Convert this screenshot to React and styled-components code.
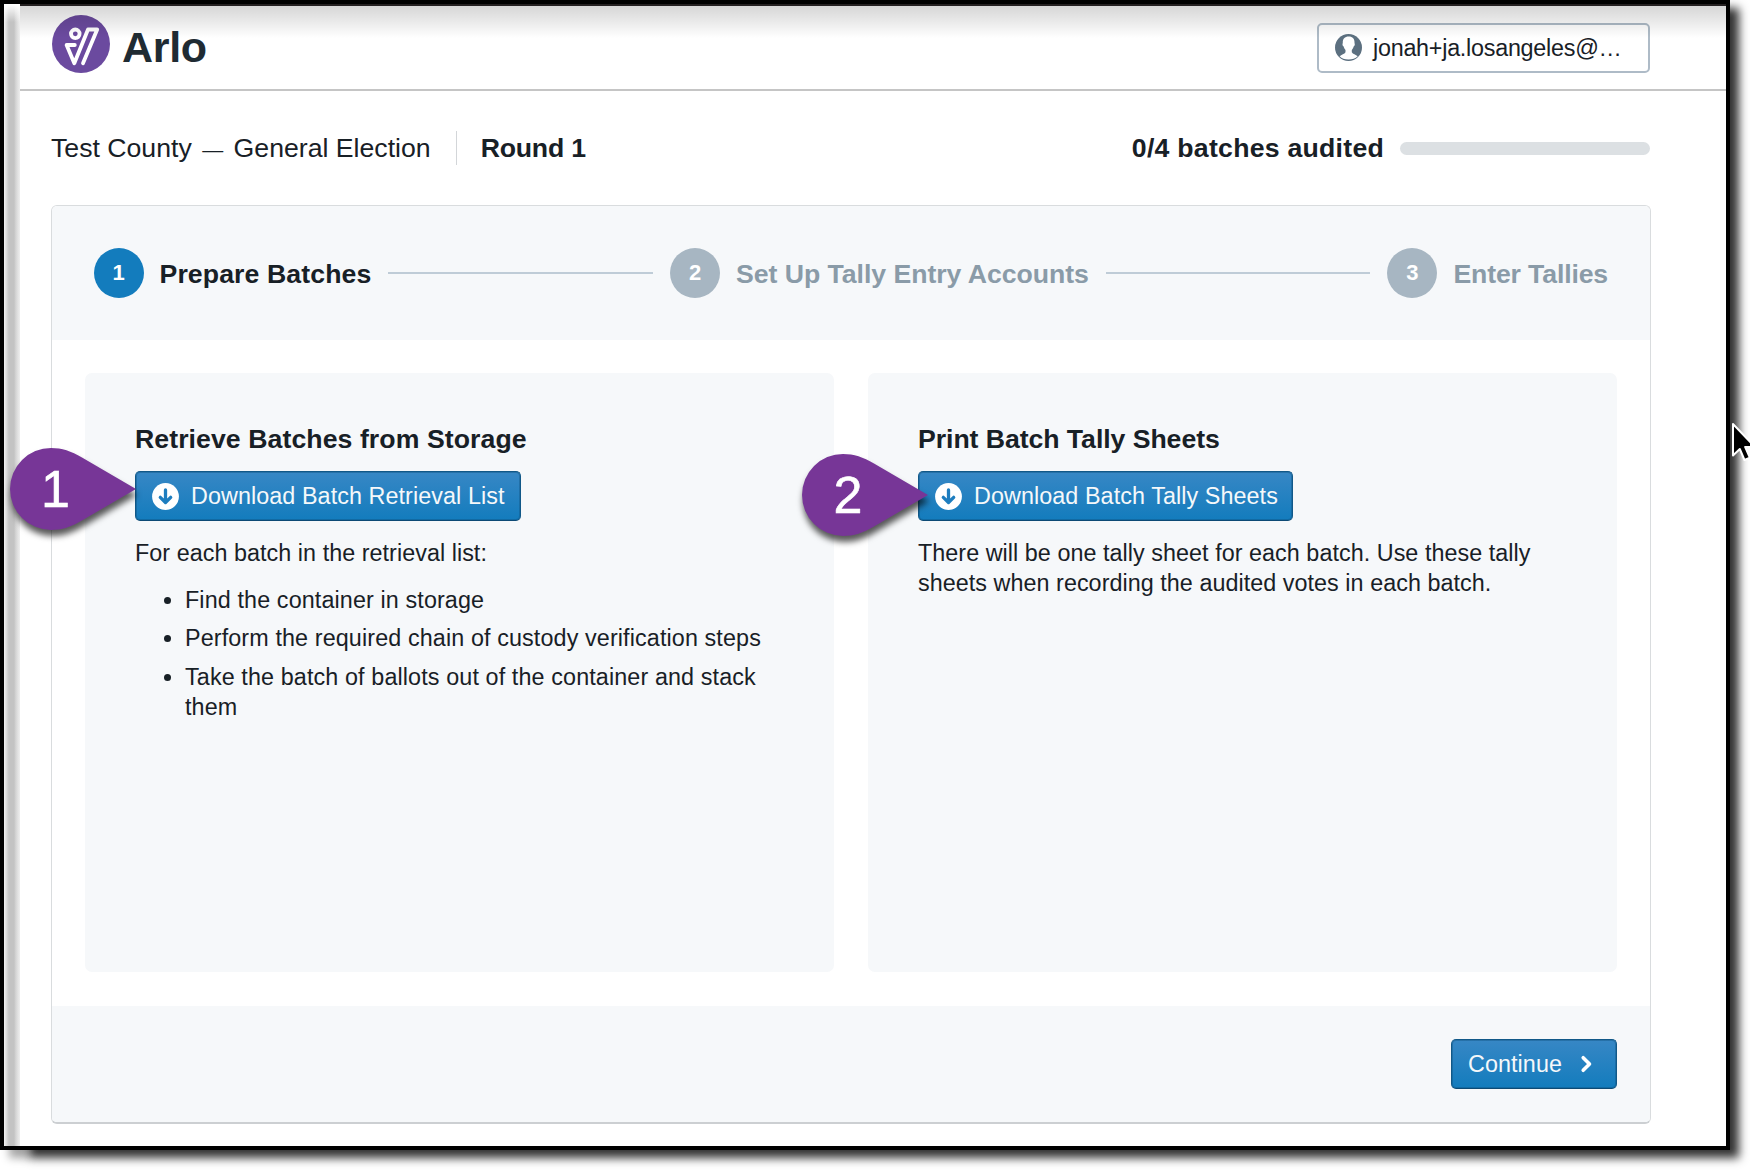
import React from "react";
import styled, { createGlobalStyle } from "styled-components";

const GlobalStyle = createGlobalStyle`
  *, *::before, *::after { box-sizing: border-box; }
  html, body { margin: 0; background: #fff; }
  body {
    width: 1750px;
    height: 1170px;
    overflow: hidden;
    color: #182026;
    font-family: "Liberation Sans", Arial, Helvetica, sans-serif;
    font-size: 23.33px;
    line-height: 30px;
  }
`;

const Desktop = styled.div`
  position: relative;
  display: flex;
  width: 1750px;
  height: 1170px;
  overflow: hidden;
`;

const WindowEdge = styled.div`
  flex: none;
  width: 20px;
  height: 1150px;
  border: solid #000;
  border-width: 4px 0 4px 4px;
  background:
    linear-gradient(#fff, rgba(255, 255, 255, 0) 18px),
    linear-gradient(90deg, #f2f2f2, #c3c3c3 5px, #c3c3c3 10px, #d6d6d6 12px, #f2f2f2);
  box-shadow: 9px 8px 9px rgba(0, 0, 0, 0.35);
`;

const Window = styled.main`
  position: relative;
  display: flex;
  flex-direction: column;
  width: 1710px;
  height: 1150px;
  border: solid #000;
  border-width: 4px 4px 4px 0;
  background: #fff;
  box-shadow: 9px 8px 9px rgba(0, 0, 0, 0.8);
`;

const TopShade = styled.div`
  position: absolute;
  inset: 0 0 auto 0;
  height: 34px;
  border-top: 2px solid #231f20;
  background: linear-gradient(rgba(0, 0, 0, 0.16), rgba(0, 0, 0, 0.09) 45%, rgba(0, 0, 0, 0));
  pointer-events: none;
`;

const Header = styled.header`
  display: flex;
  align-items: center;
  justify-content: space-between;
  height: 87px;
  padding: 2px 76px 0 32px;
  border-bottom: 2px solid #c5c5c5;
`;

const Brand = styled.div`
  display: flex;
  align-items: center;
  gap: 12px;
  color: #1f2b33;
  font-size: 43px;
  font-weight: 700;
  letter-spacing: -0.3px;
  line-height: 43px;

  svg { margin-bottom: 7px; }
`;

const UserButton = styled.button`
  display: flex;
  align-items: center;
  gap: 11px;
  width: 333px;
  height: 50px;
  padding: 0 16px;
  border: 2px solid #aebbc7;
  border-radius: 5px;
  background: transparent;
  color: inherit;
  font: inherit;
  letter-spacing: -0.25px;
`;

const StatusRow = styled.section`
  display: flex;
  align-items: center;
  height: 114px;
  padding: 0 76px 0 31px;
  font-size: 26.67px;
`;

const Election = styled.span`
  padding-top: 1px;
`;

const Dash = styled.span`
  margin: 0 3px;
  font-size: 21px;
`;

const Divider = styled.span`
  width: 1px;
  height: 34px;
  margin: 0 24px 0 25px;
  background: #d3d6d9;
`;

const Strong = styled.strong`
  letter-spacing: ${(p) => p.$tracking}px;
`;

const Progress = styled.div`
  display: flex;
  align-items: center;
  gap: 16px;
  margin-left: auto;
`;

const ProgressTrack = styled.div`
  width: 250px;
  height: 13px;
  border-radius: 7px;
  background: #dce0e3;
`;

const Card = styled.section`
  display: flex;
  flex-direction: column;
  width: 1600px;
  height: 919px;
  margin-left: 31px;
  overflow: hidden;
  border: 1px solid #d9dcde;
  border-bottom: 2px solid #cccfd2;
  border-radius: 6px;
`;

const Stepper = styled.ol`
  display: flex;
  align-items: center;
  gap: 17px;
  flex: none;
  height: 134px;
  margin: 0;
  padding: 0 42px 0 41.500px;
  background: #f6f8fa;
  list-style: none;
`;

const Step = styled.li`
  display: flex;
  align-items: center;
  gap: 16px;
  color: ${(p) => (p.$active ? "#182026" : "#8a9ba8")};
  font-size: 26.67px;
  font-weight: 700;
  letter-spacing: ${(p) => p.$tracking}px;
`;

const StepNumber = styled.span`
  display: flex;
  align-items: center;
  justify-content: center;
  width: 50px;
  height: 50px;
  border-radius: 50%;
  background: ${(p) => (p.$active ? "#137cbd" : "#a7b6c2")};
  color: #fff;
  font-size: 22px;
  letter-spacing: 0;
`;

const StepLabel = styled.span`
  padding-top: 2px;
`;

const StepLine = styled.li`
  flex: 1;
  height: 2px;
  background: #bfccd7;
`;

const Panels = styled.div`
  display: grid;
  grid-template-columns: 1fr 1fr;
  gap: 34px;
  flex: 1;
  padding: 33px 33px 34px;
`;

const Panel = styled.article`
  padding: 51px 50px 0;
  border-radius: 7px;
  background: #f6f8fa;
`;

const PanelTitle = styled.h2`
  margin: 0 0 17px;
  font-size: 26.67px;
  line-height: 30px;
  letter-spacing: ${(p) => p.$tracking}px;
`;

const Button = styled.button`
  display: flex;
  align-items: center;
  gap: 12px;
  width: ${(p) => p.$width}px;
  height: 50px;
  padding: 0 15px 0 16px;
  border: 1px solid #115888;
  border-bottom-color: #0d4a75;
  border-radius: 5px;
  background: linear-gradient(#3787c5, #137cbd);
  box-shadow: inset 0 0 0 1px rgba(16, 80, 125, 0.4);
  color: #f5f8fa;
  font: inherit;
  letter-spacing: 0.08px;
  white-space: nowrap;

  svg { flex: none; }
`;

const Text = styled.p`
  margin: 17px 0 0;
  letter-spacing: 0.05px;
`;

const Steps = styled.ul`
  margin: 17px 0 0;
  padding-left: 50px;
  letter-spacing: 0.12px;

  li + li { margin-top: 8.4px; }
`;

const Footer = styled.footer`
  display: flex;
  align-items: center;
  justify-content: flex-end;
  flex: none;
  height: 116px;
  padding: 0 33px;
  background: #f6f8fa;

  button { justify-content: space-between; padding-right: 23px; }
`;

const Marker = styled.div`
  position: absolute;
  left: ${(p) => p.$x}px;
  top: ${(p) => p.$y}px;
  width: 126px;
  height: 82px;
  color: #fff;
  font-size: 52px;
  line-height: 83px;
  -webkit-text-stroke: 0.6px #fff;

  svg {
    position: absolute;
    inset: 0;
    overflow: visible;
    filter: drop-shadow(1px 6px 3px rgba(0, 0, 0, 0.65));
  }

  span {
    position: absolute;
    left: ${(p) => p.$inset}px;
  }
`;

const Pointer = styled.svg`
  position: absolute;
  left: 1731px;
  top: 421px;
`;

const Logo = () => (
  <svg width="58" height="58" viewBox="0 0 58 58" fill="none">
    <circle cx="29" cy="29" r="29" fill="#6b4a9f" />
    <g stroke="#fff" strokeWidth="3.8" strokeLinecap="round" strokeLinejoin="round">
      <circle cx="23.3" cy="18.8" r="4.3" />
      <path d="M22.8 30H14.6L22.3 48.2L36 14.5H45.2L31 48.2" />
    </g>
  </svg>
);

const UserIcon = () => (
  <svg width="27" height="27" viewBox="0 0 27 27">
    <circle cx="13.5" cy="13.5" r="13.5" fill="#5c7080" />
    <path
      fill="#fff"
      d="M13.7 2.4c4 0 6 2.5 5.8 6.1 0 .9.3 1.1.3 2.1 0 1-.7 1.4-1.1 2-.4 1.5-1.2 2.7-1.9 3.4v2.2c1 1.8 4.1 2.3 5.9 4.1-2.3 2.2-5.4 3.3-9.2 3.3s-6.8-1.2-8.8-3.3c1.6-1.8 4.9-2.3 5.8-4.1V16c-.8-.8-1.5-2-1.9-3.400-.5-.6-1.100-1-1.100-2 0-1 .3-1.200.3-2.100-.2-3.600 1.900-6.100 5.900-6.100z"
    />
  </svg>
);

const DownloadIcon = () => (
  <svg width="27" height="27" viewBox="0 0 27 27" fill="none">
    <circle cx="13.5" cy="13.5" r="13.4" fill="#fff" />
    <path
      d="M13.5 7v12M8.3 14.3l5.2 5.2 5.2-5.2"
      stroke="#1d7dbf"
      strokeWidth="3.3"
      strokeLinecap="round"
      strokeLinejoin="round"
    />
  </svg>
);

const ChevronIcon = () => (
  <svg width="13" height="18" viewBox="0 0 13 18" fill="none">
    <path
      d="M3.2 2.7L9.5 9L3.2 15.3"
      stroke="#fff"
      strokeWidth="3.6"
      strokeLinecap="round"
      strokeLinejoin="round"
    />
  </svg>
);

const Callout = ({ x, y, inset, children }) => (
  <Marker $x={x} $y={y} $inset={inset}>
    <svg width="126" height="82" viewBox="0 0 126 82">
      <path
        fill="#773697"
        d="M126 41L72 9.500C61 3 52 0 41 0A41 41 0 0 0 41 82C52 82 61 79 72 72.500Z"
      />
    </svg>
    <span>{children}</span>
  </Marker>
);

export default function App() {
  return (
    <>
      <GlobalStyle />
      <Desktop>
        <WindowEdge />
        <Window>
          <Header>
            <Brand>
              <Logo />
              Arlo
            </Brand>
            <UserButton>
              <UserIcon />
              jonah+ja.losangeles@…
            </UserButton>
          </Header>
          <TopShade />

          <StatusRow>
            <Election>
              Test County <Dash>—</Dash> General Election
            </Election>
            <Divider />
            <Strong $tracking={-0.2}>Round 1</Strong>
            <Progress>
              <Strong $tracking={0.25}>0/4 batches audited</Strong>
              <ProgressTrack />
            </Progress>
          </StatusRow>

          <Card>
            <Stepper>
              <Step $active $tracking={0.1}>
                <StepNumber $active>1</StepNumber>
                <StepLabel>Prepare Batches</StepLabel>
              </Step>
              <StepLine />
              <Step $tracking={-0.05}>
                <StepNumber>2</StepNumber>
                <StepLabel>Set Up Tally Entry Accounts</StepLabel>
              </Step>
              <StepLine />
              <Step $tracking={-0.15}>
                <StepNumber>3</StepNumber>
                <StepLabel>Enter Tallies</StepLabel>
              </Step>
            </Stepper>

            <Panels>
              <Panel>
                <PanelTitle $tracking={0.07}>Retrieve Batches from Storage</PanelTitle>
                <Button $width={386}>
                  <DownloadIcon />
                  Download Batch Retrieval List
                </Button>
                <Text>For each batch in the retrieval list:</Text>
                <Steps>
                  <li>Find the container in storage</li>
                  <li>Perform the required chain of custody verification steps</li>
                  <li>Take the batch of ballots out of the container and stack them</li>
                </Steps>
              </Panel>
              <Panel>
                <PanelTitle $tracking={-0.06}>Print Batch Tally Sheets</PanelTitle>
                <Button $width={375}>
                  <DownloadIcon />
                  Download Batch Tally Sheets
                </Button>
                <Text>
                  There will be one tally sheet for each batch. Use these tally sheets when
                  recording the audited votes in each batch.
                </Text>
              </Panel>
            </Panels>

            <Footer>
              <Button $width={166}>
                Continue
                <ChevronIcon />
              </Button>
            </Footer>
          </Card>
        </Window>

        <Callout x={10} y={448} inset={31}>1</Callout>
        <Callout x={802} y={454} inset={31.5}>2</Callout>

        <Pointer width="24" height="42" viewBox="0 0 24 42">
          <path
            d="M2 3V34.5L8.8 28L13.5 39L18.8 36.7L14.2 26H24Z"
            fill="#000"
            stroke="#fff"
            strokeWidth="2"
            strokeLinejoin="round"
          />
        </Pointer>
      </Desktop>
    </>
  );
}
